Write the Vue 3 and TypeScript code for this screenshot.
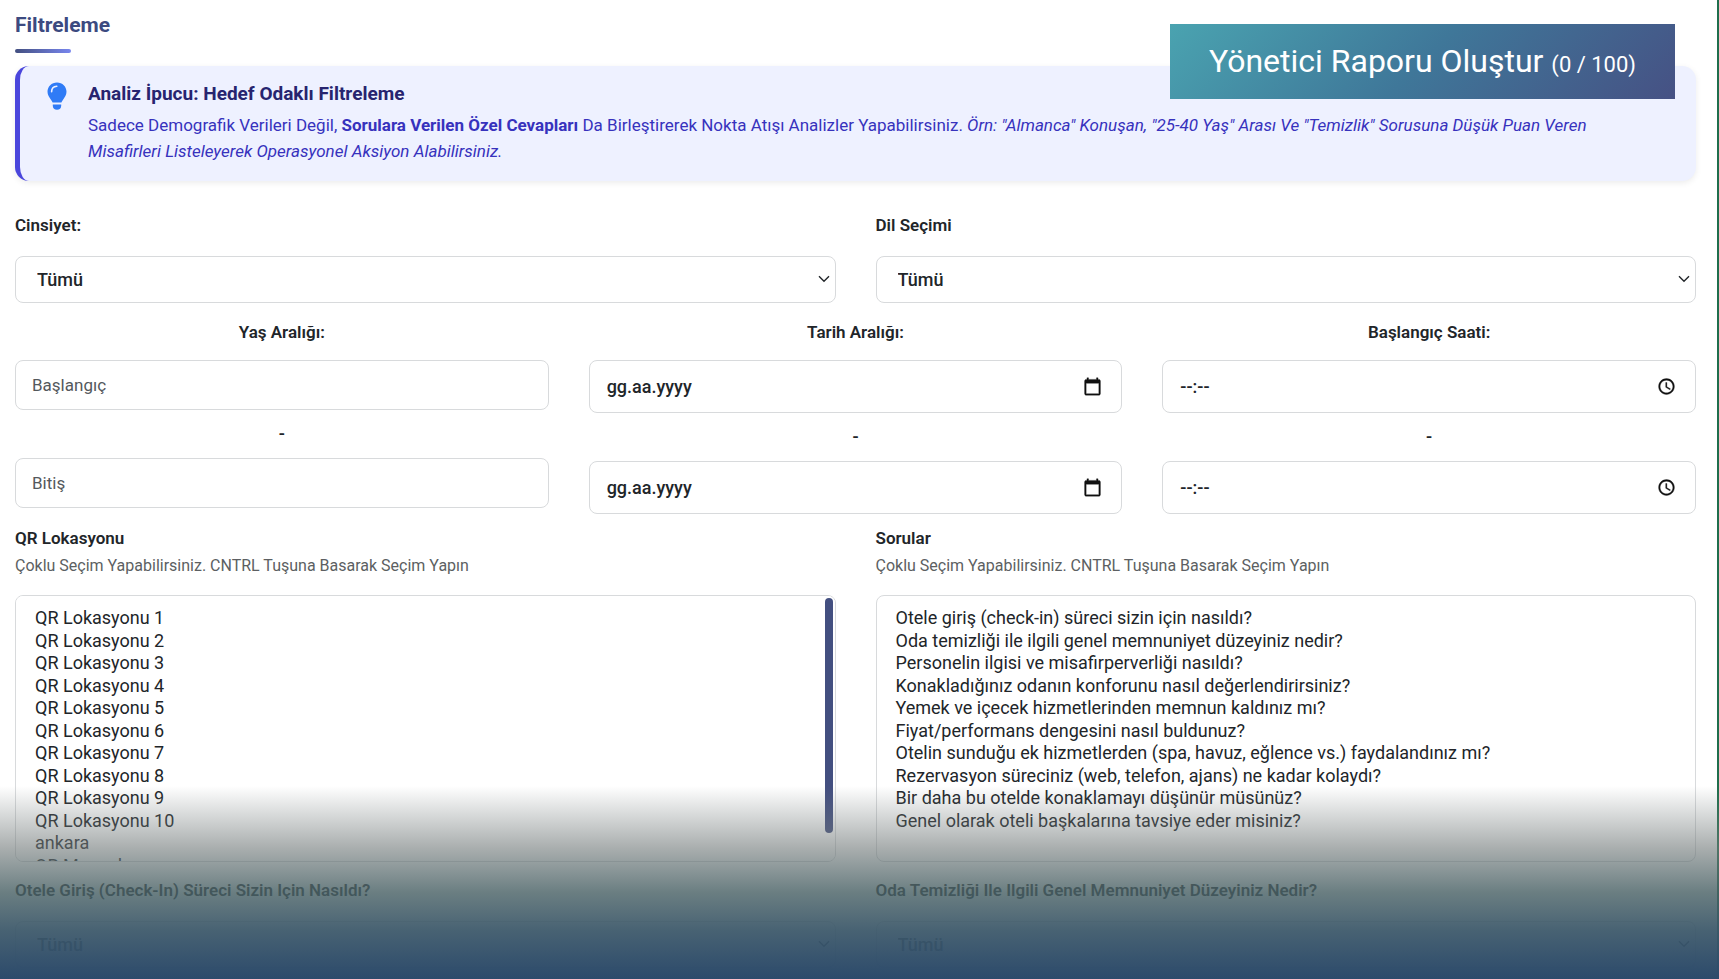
<script setup lang="ts">
import { ref } from 'vue'

interface RangeGroup {
  id: string
  title: string
  kind: 'age' | 'date' | 'time'
  placeholders: [string, string]
}

const ranges: RangeGroup[] = [
  { id: 'yas', title: 'Yaş Aralığı:', kind: 'age', placeholders: ['Başlangıç', 'Bitiş'] },
  { id: 'tarih', title: 'Tarih Aralığı:', kind: 'date', placeholders: ['gg.aa.yyyy', 'gg.aa.yyyy'] },
  { id: 'saat', title: 'Başlangıç Saati:', kind: 'time', placeholders: ['--:--', '--:--'] },
]

const topFilters = [
  { id: 'cinsiyet', label: 'Cinsiyet:' },
  { id: 'dil', label: 'Dil Seçimi' },
]

const answerFilters = [
  { id: 'cevap-1', label: 'Otele Giriş (Check-In) Süreci Sizin Için Nasıldı?' },
  { id: 'cevap-2', label: 'Oda Temizliği Ile Ilgili Genel Memnuniyet Düzeyiniz Nedir?' },
]

const locations = [
  ...Array.from({ length: 10 }, (_, i) => `QR Lokasyonu ${i + 1}`),
  'ankara',
  'QR Manuel',
]

const questions = [
  'Otele giriş (check-in) süreci sizin için nasıldı?',
  'Oda temizliği ile ilgili genel memnuniyet düzeyiniz nedir?',
  'Personelin ilgisi ve misafirperverliği nasıldı?',
  'Konakladığınız odanın konforunu nasıl değerlendirirsiniz?',
  'Yemek ve içecek hizmetlerinden memnun kaldınız mı?',
  'Fiyat/performans dengesini nasıl buldunuz?',
  'Otelin sunduğu ek hizmetlerden (spa, havuz, eğlence vs.) faydalandınız mı?',
  'Rezervasyon süreciniz (web, telefon, ajans) ne kadar kolaydı?',
  'Bir daha bu otelde konaklamayı düşünür müsünüz?',
  'Genel olarak oteli başkalarına tavsiye eder misiniz?',
]

const lists = [
  { id: 'qr', title: 'QR Lokasyonu', options: locations, scrolls: true },
  { id: 'sorular', title: 'Sorular', options: questions, scrolls: false },
]

const used = ref(0)
const limit = 100
</script>

<template>
  <div class="page">
    <main class="panel">
      <h1 class="title">Filtreleme</h1>

      <section class="hint">
        <svg class="bulb" viewBox="0 0 20 28" aria-hidden="true">
          <path
            d="M10 0.5C4.6 0.5 0.5 4.6 0.5 9.8c0 3.4 1.8 5.6 3.3 7.6 0.9 1.2 1.5 2.2 1.8 3.1h8.8c0.3-0.9 0.9-1.9 1.8-3.1 1.5-2 3.3-4.2 3.3-7.6C19.5 4.6 15.4 0.5 10 0.5z"
            fill="#2f7bf6"
          />
          <path d="M4.6 9.8C4.6 6.6 6.8 4.5 9.8 4.3" fill="none" stroke="#eef1ff" stroke-width="1.6" stroke-linecap="round" />
          <path d="M5.8 22.5h8.4v1.2c0 2.4-1.7 4-4.2 4s-4.2-1.6-4.2-4z" fill="#2f7bf6" />
        </svg>
        <div class="hint-body">
          <h2 class="hint-title">Analiz İpucu: Hedef Odaklı Filtreleme</h2>
          <p class="hint-text">
            Sadece Demografik Verileri Değil, <strong>Sorulara Verilen Özel Cevapları</strong> Da Birleştirerek Nokta
            Atışı Analizler Yapabilirsiniz.
            <em>Örn: "Almanca" Konuşan, "25-40 Yaş" Arası Ve "Temizlik" Sorusuna Düşük Puan Veren Misafirleri
              Listeleyerek Operasyonel Aksiyon Alabilirsiniz.</em>
          </p>
        </div>
      </section>

      <div class="row two">
        <div v-for="f in topFilters" :key="f.id" class="field">
          <label class="label" :for="f.id">{{ f.label }}</label>
          <div class="control">
            <select :id="f.id" class="box dropdown">
              <option>Tümü</option>
            </select>
            <svg class="chevron" viewBox="0 0 12 8" aria-hidden="true"><path d="M1 1.2l5 5 5-5" /></svg>
          </div>
        </div>
      </div>

      <div class="row three">
        <div v-for="r in ranges" :key="r.id" class="range" :class="r.kind" role="group" :aria-labelledby="r.id">
          <span :id="r.id" class="label range-label">{{ r.title }}</span>
          <template v-for="(p, i) in r.placeholders" :key="i">
            <span v-if="i === 1" class="dash">-</span>
            <div class="control">
              <input class="box entry" type="text" :placeholder="p" :aria-label="`${r.title} ${i + 1}`" />
              <svg v-if="r.kind === 'date'" class="picker" viewBox="0 0 24 24" aria-hidden="true">
                <path
                  d="M20 3h-1V1h-2v2H7V1H5v2H4c-1.100 0-2 .9-2 2v16c0 1.100.9 2 2 2h16c1.100 0 2-.9 2-2V5c0-1.100-.9-2-2-2zm0 18H4V8h16v13z"
                />
              </svg>
              <svg v-if="r.kind === 'time'" class="picker" viewBox="0 0 24 24" aria-hidden="true">
                <path
                  d="M11.990 2C6.470 2 2 6.480 2 12s4.470 10 9.990 10C17.520 22 22 17.520 22 12S17.520 2 11.990 2zM12 20c-4.420 0-8-3.580-8-8s3.580-8 8-8 8 3.580 8 8-3.580 8-8 8zM12.500 7H11v6l5.250 3.150.75-1.230-4.500-2.670z"
                />
              </svg>
            </div>
          </template>
        </div>
      </div>

      <div class="row two lists">
        <div v-for="l in lists" :key="l.id" class="field">
          <label class="label list-label" :for="l.id">{{ l.title }}</label>
          <p class="note">Çoklu Seçim Yapabilirsiniz. CNTRL Tuşuna Basarak Seçim Yapın</p>
          <div class="control">
            <select :id="l.id" class="box listbox" multiple>
              <option v-for="o in l.options" :key="o">{{ o }}</option>
            </select>
            <span v-if="l.scrolls" class="thumb" aria-hidden="true"></span>
          </div>
        </div>
      </div>

      <div class="row two answers">
        <div v-for="f in answerFilters" :key="f.id" class="field">
          <label class="label" :for="f.id">{{ f.label }}</label>
          <div class="control">
            <select :id="f.id" class="box dropdown">
              <option>Tümü</option>
            </select>
            <svg class="chevron" viewBox="0 0 12 8" aria-hidden="true"><path d="M1 1.2l5 5 5-5" /></svg>
          </div>
        </div>
      </div>
    </main>

    <button class="report" type="button">
      Yönetici Raporu Oluştur <span class="quota">({{ used }} / {{ limit }})</span>
    </button>
    <div class="fade" aria-hidden="true"></div>
  </div>
</template>

<style>
body {
  background: #1f6e4c;
}
</style>

<style scoped>
.page {
  position: relative;
  height: 100vh;
  overflow: hidden;
  box-sizing: border-box;
  padding-right: 2px;
  font-family: Roboto, 'Liberation Sans', sans-serif;
  color: #212529;
}

.panel {
  min-height: 100%;
  box-sizing: border-box;
  padding: 13px 21px 0 15px;
  background: #fff;
}

.title {
  display: flex;
  flex-direction: column;
  gap: 12px;
  margin: 0 0 13px;
  font-size: 21px;
  line-height: 24px;
  font-weight: 700;
  color: #3c4a80;
}

.title::after {
  content: '';
  width: 56px;
  height: 4px;
  border-radius: 2px;
  background: linear-gradient(90deg, #434f80, #7886ee);
}

.hint {
  display: flex;
  gap: 21px;
  padding: 16px 60px 17px 27px;
  border-left: 5px solid #4a46dc;
  border-radius: 14px;
  background: #eef1ff;
  box-shadow: 0 2px 6px rgba(0, 0, 0, 0.08);
}

.bulb {
  flex: none;
  width: 20px;
  height: 28px;
}

.hint-title {
  margin: 0 0 6px;
  font-size: 19px;
  line-height: 24px;
  font-weight: 700;
  color: #27246f;
}

.hint-text {
  margin: 0;
  font-size: 17px;
  line-height: 26px;
  color: #3732bd;
}

.row {
  display: grid;
  gap: 40px;
}

.two {
  grid-template-columns: repeat(2, minmax(0, 1fr));
  margin-top: 32px;
}

.three {
  grid-template-columns: repeat(3, minmax(0, 1fr));
  margin-top: 17px;
}

.lists {
  margin-top: 12px;
}

.answers {
  margin-top: 16px;
}

.field {
  display: flex;
  flex-direction: column;
}

.label {
  margin-bottom: 19px;
  font-size: 17px;
  line-height: 24px;
  font-weight: 600;
}

.range {
  display: flex;
  flex-direction: column;
  align-items: center;
}

.range-label {
  margin-bottom: 16px;
}

.list-label {
  margin-bottom: 4px;
}

.note {
  margin: 0 0 17px;
  font-size: 16px;
  line-height: 24px;
  color: #5c5f62;
}

.control {
  position: relative;
  width: 100%;
}

.box {
  display: block;
  width: 100%;
  box-sizing: border-box;
  margin: 0;
  border: 1px solid #d8dadc;
  border-radius: 8px;
  background: #fff;
  font-family: inherit;
  font-size: 18px;
  color: #212529;
  outline: none;
}

.dropdown {
  appearance: none;
  height: 47px;
  padding: 0 36px 0 21px;
  font-weight: 500;
}

.chevron {
  position: absolute;
  right: 6px;
  top: 19px;
  width: 12px;
  height: 8px;
  fill: none;
  stroke: #212529;
  stroke-width: 1.4;
  pointer-events: none;
}

.entry {
  height: 53px;
  padding: 0 60px 0 17px;
  font-weight: 500;
}

.age .entry {
  height: 50px;
  padding: 0 16px;
  font-size: 17px;
  font-weight: 400;
}

.entry::placeholder {
  color: #212529;
  opacity: 1;
}

.age .entry::placeholder {
  color: #54585c;
}

.picker {
  position: absolute;
  right: 20px;
  top: 17px;
  width: 19px;
  height: 19px;
  fill: #111;
  stroke: #111;
  stroke-width: 0.4;
  pointer-events: none;
}

.dash {
  padding: 12px 0;
  font-size: 18px;
  line-height: 24px;
  font-weight: 500;
}

.listbox {
  height: 267px;
  padding: 11px 19px;
  overflow-y: auto;
  scrollbar-width: none;
}

.listbox option {
  padding: 0;
  min-height: 1.25em;
}

.thumb {
  position: absolute;
  top: 3px;
  right: 3px;
  width: 8px;
  height: 88%;
  border-radius: 4px;
  background: #434f80;
}

.report {
  position: absolute;
  top: 24px;
  right: 44px;
  height: 75px;
  padding: 2px 39px 0;
  border: 0;
  background: linear-gradient(135deg, #4aa3b0, #3f7799 50%, #465184);
  font-family: inherit;
  font-size: 32px;
  line-height: 40px;
  color: #fff;
}

.quota {
  font-size: 22px;
}

.fade {
  position: absolute;
  left: 0;
  right: 0;
  bottom: 0;
  height: 193px;
  background: linear-gradient(
    180deg,
    rgba(120, 125, 125, 0),
    rgba(113, 121, 121, 0.6) 32%,
    rgba(74, 98, 102, 0.82) 55%,
    rgba(60, 88, 106, 0.94) 75%,
    #2c4a6b
  );
  pointer-events: none;
}
</style>
